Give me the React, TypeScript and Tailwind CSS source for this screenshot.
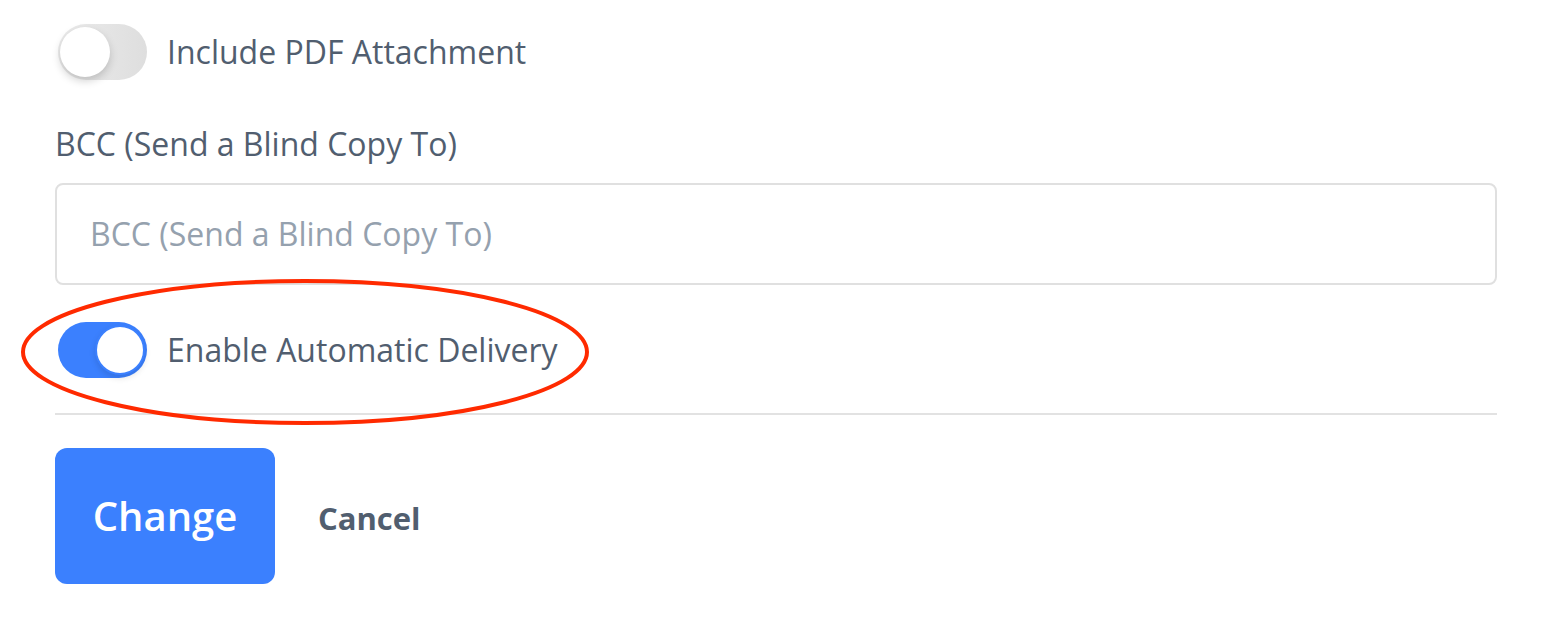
import React from "react";

function Toggle({ on }: { on: boolean }) {
  return (
    <div
      className={
        "relative h-[56px] w-[89px] shrink-0 rounded-full " +
        (on ? "bg-[#3b80fe]" : "bg-gradient-to-r from-[#ececec] to-[#dedede]")
      }
    >
      <div
        className={
          "absolute top-[3px] h-[50px] w-[50px] rounded-full bg-white " +
          (on
            ? "right-[2px] border-2 border-[#3b80fe] shadow-[0_3px_6px_rgba(0,0,0,0.12)]"
            : "left-[2px] shadow-[0_4px_8px_rgba(0,0,0,0.18)]")
        }
      />
    </div>
  );
}

export default function App() {
  return (
    <div
      className="relative min-h-[628px] w-[1562px] bg-white text-[#515e6f]"
      style={{ fontFamily: '"Open Sans", "Noto Sans", sans-serif' }}
    >
      <div className="flex w-[1497px] flex-col pl-[55px] pt-[24px]">
        <div className="flex items-center gap-[20px] pl-[3px]">
          <Toggle on={false} />
          <span className="text-[32px] leading-[40px]">Include PDF Attachment</span>
        </div>
        <label className="mt-[44px] text-[32px] leading-[40px]">BCC (Send a Blind Copy To)</label>
        <div className="mt-[19px] flex h-[102px] items-center rounded-[8px] border-2 border-[#e0e0e0] pl-[33px] text-[32px] text-[#95a1ae]">
          BCC (Send a Blind Copy To)
        </div>
        <div className="mt-[37px] flex items-center gap-[20px] pl-[3px]">
          <Toggle on={true} />
          <span className="text-[32px] leading-[40px]">Enable Automatic Delivery</span>
        </div>
        <div className="mt-[35px] h-[2px] bg-[#e2e2e2]" />
        <div className="mt-[33px] flex items-center gap-[43px]">
          <button className="flex h-[136px] w-[220px] items-center justify-center rounded-[12px] bg-[#3b80fe] text-[40px] font-semibold text-white">
            Change
          </button>
          <button className="pt-[4px] text-[31px] font-bold text-[#515e6f]">Cancel</button>
        </div>
      </div>
      <svg
        className="pointer-events-none absolute left-0 top-0"
        width="1562"
        height="628"
        viewBox="0 0 1562 628"
      >
        <ellipse cx="305" cy="352" rx="282" ry="71" fill="none" stroke="#ff2a00" strokeWidth="4" />
      </svg>
    </div>
  );
}
